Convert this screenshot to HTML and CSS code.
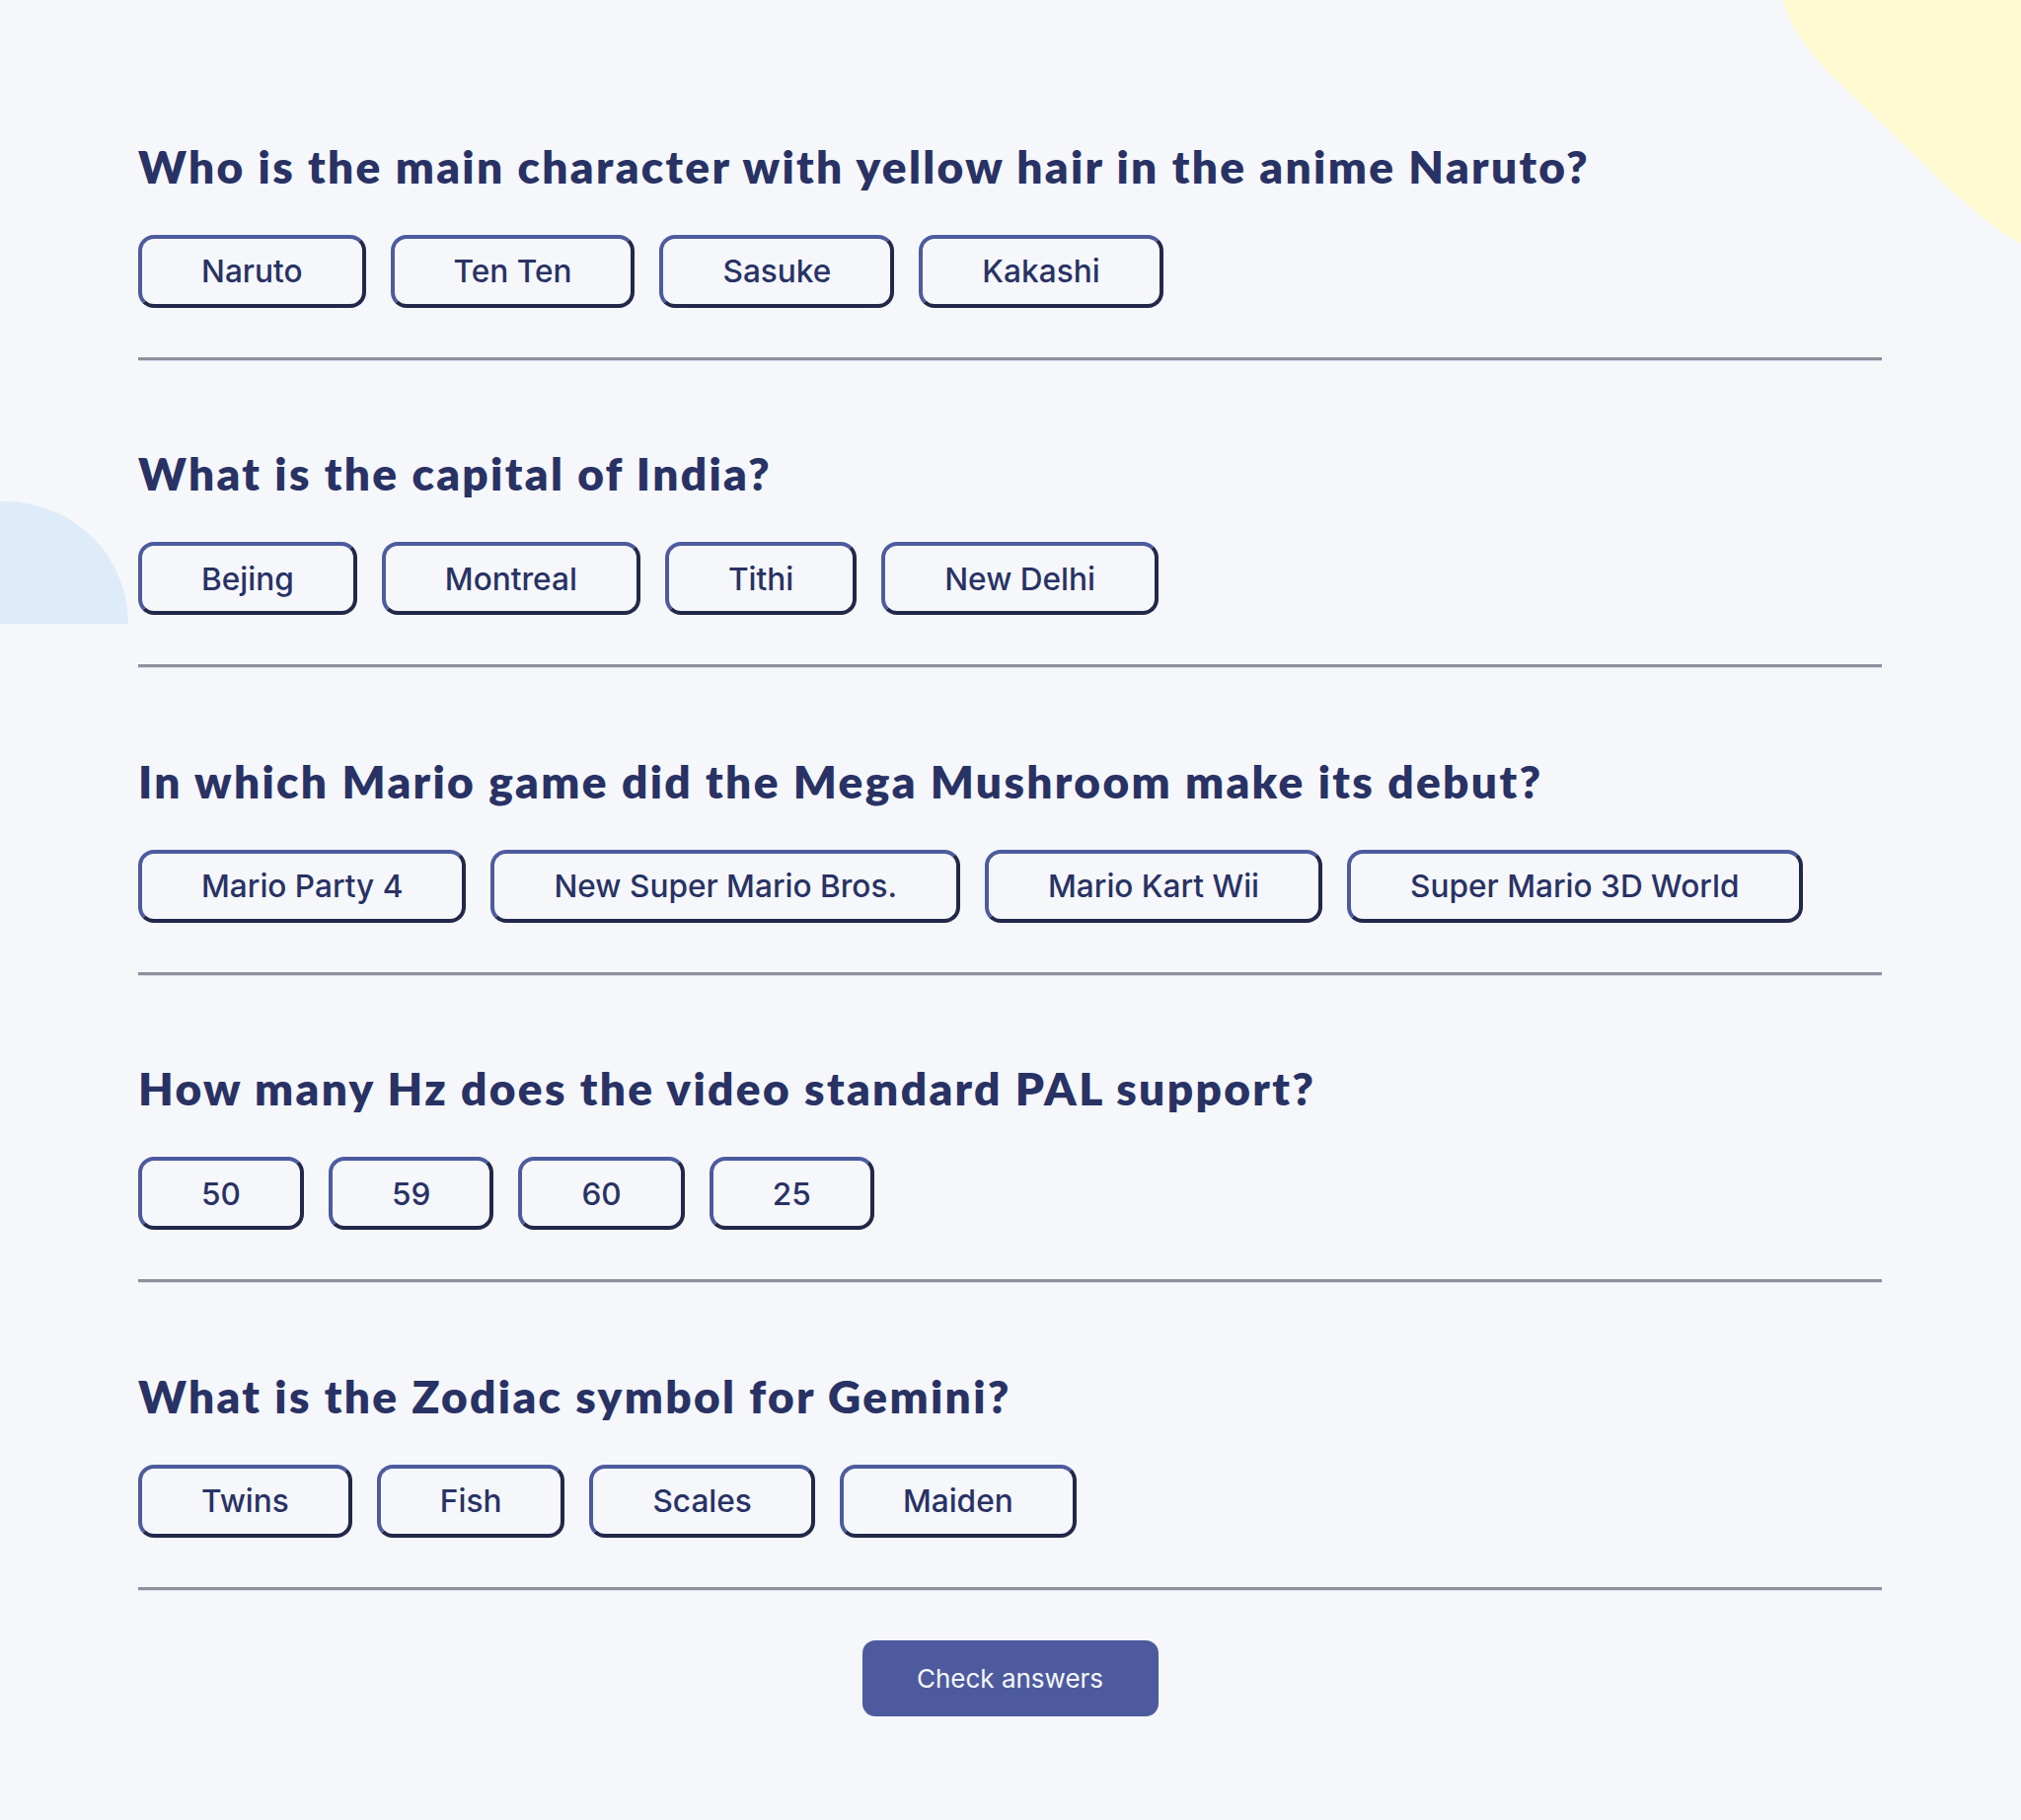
FILE: index.html
```html
<!DOCTYPE html>
<html lang="en">
<head>
<meta charset="utf-8">
<title>Quizzical</title>
<link rel="stylesheet" href="styles.css">
</head>
<body>
<div class="blob blob-yellow">
  <svg width="268" height="260" viewBox="0 0 268 260"><path d="M27 0 C34 28 52 52 80 80 L163 160 C195 192 230 225 268 247 L268 0 Z" fill="#FFFAD1"/></svg>
</div>
<div class="blob blob-blue"></div>
<main class="quiz">
  <section class="question">
    <h2 class="question-title">Who is the main character with yellow hair in the anime Naruto?</h2>
    <div class="answers">
      <button class="answer">Naruto</button>
      <button class="answer">Ten Ten</button>
      <button class="answer">Sasuke</button>
      <button class="answer">Kakashi</button>
    </div>
    <hr class="divider">
  </section>
  <section class="question">
    <h2 class="question-title">What is the capital of India?</h2>
    <div class="answers">
      <button class="answer">Bejing</button>
      <button class="answer">Montreal</button>
      <button class="answer">Tithi</button>
      <button class="answer">New Delhi</button>
    </div>
    <hr class="divider">
  </section>
  <section class="question">
    <h2 class="question-title">In which Mario game did the Mega Mushroom make its debut?</h2>
    <div class="answers">
      <button class="answer">Mario Party 4</button>
      <button class="answer">New Super Mario Bros.</button>
      <button class="answer">Mario Kart Wii</button>
      <button class="answer">Super Mario 3D World</button>
    </div>
    <hr class="divider">
  </section>
  <section class="question">
    <h2 class="question-title">How many Hz does the video standard PAL support?</h2>
    <div class="answers">
      <button class="answer">50</button>
      <button class="answer">59</button>
      <button class="answer">60</button>
      <button class="answer">25</button>
    </div>
    <hr class="divider">
  </section>
  <section class="question">
    <h2 class="question-title">What is the Zodiac symbol for Gemini?</h2>
    <div class="answers">
      <button class="answer">Twins</button>
      <button class="answer">Fish</button>
      <button class="answer">Scales</button>
      <button class="answer">Maiden</button>
    </div>
    <hr class="divider">
  </section>
  <div class="actions">
    <button class="check-btn">Check answers</button>
  </div>
</main>
</body>
</html>
```

FILE: styles.css
```css
html, body {
  margin: 0;
  padding: 0;
}
body {
  background: #F5F7FB;
  min-height: 1844px;
  position: relative;
  overflow: hidden;
  font-family: Inter, "Noto Sans", sans-serif;
  color: #293264;
}
.blob {
  position: absolute;
  z-index: 0;
}
.blob-yellow {
  top: 0;
  right: 0;
  width: 268px;
  height: 260px;
}
.blob-yellow svg {
  display: block;
}
.blob-blue {
  left: -120px;
  top: 508px;
  width: 250px;
  height: 124px;
  background: #DEECF9;
  border-radius: 125px 125px 0 0;
}
.quiz {
  position: relative;
  z-index: 1;
  width: 1767px;
  margin-left: 140px;
  padding-top: 54px;
  display: flex;
  flex-direction: column;
}
.question {
  padding-top: 86.5px;
  display: flex;
  flex-direction: column;
}
.question-title {
  margin: 0;
  font-family: Lato, sans-serif;
  font-weight: 800;
  font-size: 46px;
  line-height: 56px;
  letter-spacing: 2.35px;
  color: #293264;
}
.answers {
  display: flex;
  gap: 25px;
  margin-top: 41px;
}
.answer {
  box-sizing: border-box;
  height: 74px;
  padding: 0 60px;
  background: transparent;
  border: 4px solid;
  border-color: #4D5B9E #222849 #222849 #4D5B9E;
  border-radius: 16px;
  font-family: Inter, sans-serif;
  font-weight: 500;
  font-size: 31.6px;
  color: #293264;
}
.divider {
  margin: 50px 0 0;
  height: 0;
  border: 0;
  border-top: 3px solid #8E909C;
  border-bottom: 1px solid #DCDFEF;
}
.actions {
  display: flex;
  justify-content: center;
  margin-top: 50px;
}
.check-btn {
  width: 300px;
  height: 77px;
  border: 0;
  border-radius: 13px;
  background: #4D5B9E;
  color: #F5F7FB;
  font-family: Inter, sans-serif;
  font-weight: 400;
  font-size: 26px;
}
```
